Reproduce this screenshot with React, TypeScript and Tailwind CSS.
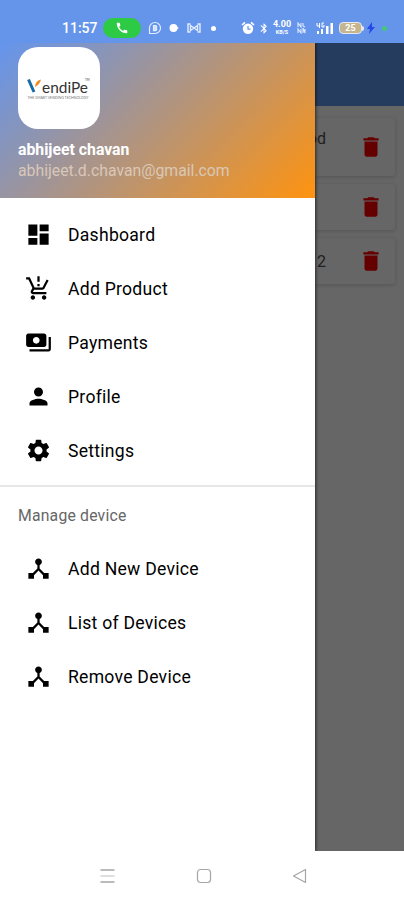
import type { IconType } from "react-icons";
import {
  MdBluetooth,
  MdCall,
  MdDashboard,
  MdDelete,
  MdDeviceHub,
  MdPayments,
  MdPerson,
  MdProductionQuantityLimits,
  MdSettings,
} from "react-icons/md";

interface MenuEntry {
  label: string;
  icon: IconType;
}

const MAIN_ITEMS: MenuEntry[] = [
  { label: "Dashboard", icon: MdDashboard },
  { label: "Add Product", icon: MdProductionQuantityLimits },
  { label: "Payments", icon: MdPayments },
  { label: "Profile", icon: MdPerson },
  { label: "Settings", icon: MdSettings },
];

const DEVICE_ITEMS: MenuEntry[] = [
  { label: "Add New Device", icon: MdDeviceHub },
  { label: "List of Devices", icon: MdDeviceHub },
  { label: "Remove Device", icon: MdDeviceHub },
];

function StatusBar() {
  return (
    <header className="flex h-[43px] shrink-0 items-center bg-[#6495ea] pt-[13px] text-white">
      <span className="ml-[62px] w-[36px] text-[14px] leading-none font-medium whitespace-nowrap">11:57</span>
      <span className="ml-[5px] flex h-[20px] w-[38px] items-center justify-center rounded-full bg-[#2dca45]">
        <MdCall className="h-[14px] w-[14px]" />
      </span>
      <svg className="ml-[7px] h-[14px] w-[14px]" viewBox="0 0 14 14" fill="none" stroke="#e4edff" strokeWidth="1.2">
        <path d="M1.5 12.5V7A5.5 5.5 0 1 1 7 12.5Z" />
        <path d="M5.5 4.5h2a1.2 1.2 0 0 1 0 2.5 1.2 1.2 0 0 1 0 2.6h-2Z" fill="#cfe0ff" />
      </svg>
      <svg className="ml-[7px] h-[10px] w-[11px]" viewBox="0 0 11 10" fill="#fff">
        <circle cx="4.5" cy="5" r="4" />
        <path d="M6 3l4 2-4 2Z" />
      </svg>
      <svg className="ml-[7px] h-[10px] w-[14px]" viewBox="0 0 14 10" fill="none" stroke="#e4edff" strokeWidth="1.4">
        <path d="M3.5 1H1v8h2.5M10.5 1H13v8h-2.5M3.5 2.5L7 5 3.5 7.5ZM10.5 2.5L7 5l3.5 2.5Z" />
      </svg>
      <span className="ml-[10px] h-[5px] w-[5px] rounded-full bg-white" />
      {/* Alarm clock, solid face */}
      <svg className="ml-[25px] h-[14px] w-[14px]" viewBox="0 0 14 14" fill="#fff">
        <circle cx="7" cy="7.8" r="5.2" />
        <path d="M1 4L4 1.3M13 4L10 1.3" stroke="#fff" strokeWidth="1.6" />
        <path d="M7 5v3.2h2.5" fill="none" stroke="#6495ea" strokeWidth="1.2" />
      </svg>
      <MdBluetooth className="ml-[3px] h-[13px] w-[12px]" />
      <span className="ml-[2px] flex w-[20px] flex-col items-center font-bold whitespace-nowrap">
        <span className="text-[9px] leading-[9px]">4.00</span>
        <span className="text-[5.5px] leading-[7px]">KB/S</span>
      </span>
      <svg className="ml-[5px] h-[12px] w-[9px]" viewBox="0 0 9 12" fill="none" stroke="#dce8ff" strokeWidth="1.1">
        <path d="M1 5V1l3 4V1M6 1v3l2 1M1 11V7l3 4V7M6 11V6l2 5V7" />
      </svg>
      <svg className="ml-[10px] h-[13px] w-[18px]" viewBox="0 0 18 13" fill="#fff">
        <path d="M1 9h2v3H1zM5 7h2v5H5zM10 4h2.5v8H10zM14.5 1H17v11h-2.5z" />
        <path d="M1 1v3h3M3.5 1v5M8 1H6v4h2V3" fill="none" stroke="#fff" strokeWidth="1" />
      </svg>
      <span className="ml-[5px] flex h-[12px] w-[23px] items-center justify-center rounded-[4px] border border-[#e5e8ef] bg-[#c5b58e] text-[9px] leading-none font-bold">
        25
      </span>
      <span className="h-[5px] w-[2px] rounded-r bg-[#e5e8ef]" />
      <svg className="ml-[3px] h-[12px] w-[8px]" viewBox="0 0 8 12" fill="#2548e8">
        <path d="M5 0L0 7h3l-1 5 6-7H5Z" />
      </svg>
      <span className="ml-[7px] h-[5px] w-[5px] rounded-full bg-[#43c878]" />
    </header>
  );
}

function Logo() {
  return (
    <div className="flex h-[82px] w-[82px] items-center justify-center rounded-[20px] bg-white">
      <svg className="h-[26px] w-[66px]" viewBox="0 0 66 26" fontFamily="Lato, sans-serif">
        <path d="M2.5 4.5L8 17" stroke="#176ba5" strokeWidth="3" fill="none" />
        <path d="M9 12Q9 6 15 4.5Q14 9 9 12Z" fill="#f18b1d" />
        <text x="16" y="18" fontSize="15" fill="#333" textLength="46" lengthAdjust="spacingAndGlyphs">
          endiPe
        </text>
        <text x="59" y="6" fontSize="3" fill="#333">TM</text>
        <text x="1.5" y="23.5" fontSize="2.8" fill="#777" textLength="61" lengthAdjust="spacingAndGlyphs">
          THE SMART VENDING TECHNOLOGY
        </text>
      </svg>
    </div>
  );
}

function MenuItem({ label, icon: Icon }: MenuEntry) {
  return (
    <li className="flex h-[54px] items-center pl-[25px]">
      <Icon className="h-[27px] w-[27px]" />
      <span className="ml-4 pt-[2px] text-[17.6px] leading-[20px] font-[450] tracking-[0.25px] whitespace-nowrap">
        {label}
      </span>
    </li>
  );
}

function Drawer() {
  return (
    <aside className="z-10 w-[315px] shrink-0 bg-white shadow-[1px_0_3px_rgba(0,0,0,0.6)]">
      <div className="h-[155px] bg-[linear-gradient(135deg,#6495ed,#ff930f)] pt-1 pl-[18px]">
        <Logo />
        <p className="mt-[11px] text-[15.8px] leading-[19px] font-bold text-white">abhijeet chavan</p>
        <p className="mt-[2px] text-[15.8px] leading-[19px] text-[#d9c8b8]">abhijeet.d.chavan@gmail.com</p>
      </div>
      <ul className="pt-[9px] pb-[8px]">
        {MAIN_ITEMS.map((item) => <MenuItem key={item.label} {...item} />)}
      </ul>
      <div className="flex h-[56px] items-center border-t-2 border-[#e6e6e6] pt-[3px] pl-[18px] text-[15.75px] tracking-[0.2px] text-[#666]">
        Manage device
      </div>
      <ul>
        {DEVICE_ITEMS.map((item) => <MenuItem key={item.label} {...item} />)}
      </ul>
    </aside>
  );
}

function DeviceCard({ name, className }: { name: string; className: string }) {
  return (
    <div className={`mr-[9px] flex items-center justify-between rounded-r-[3px] bg-[#666] pr-[11px] text-[#202020] shadow-[0_1px_4px_rgba(0,0,0,0.18)] ${className}`}>
      <span className="flex w-[11px] justify-end text-[16px] leading-[20px] whitespace-nowrap">{name}</span>
      <MdDelete className="h-[26px] w-[26px] shrink-0 text-[#650000]" />
    </div>
  );
}

export default function App() {
  return (
    <div className="flex h-[900px] w-[404px] flex-col overflow-hidden bg-white font-['Roboto',sans-serif] text-black">
      <StatusBar />
      <div className="flex h-[808px] overflow-hidden">
        <Drawer />
        {/* Dimmed device list behind the drawer */}
        <main className="min-w-0 flex-1 overflow-hidden bg-[#666]">
          <div className="h-[63px] bg-[#263c5f]" />
          <div className="flex flex-col gap-2 pt-3">
            <DeviceCard name="od" className="h-[58px] [&>span]:mb-[16px]" />
            <DeviceCard name="" className="h-[46px]" />
            <DeviceCard name="2" className="h-[46px] [&>span]:mt-[2px]" />
          </div>
        </main>
      </div>
      <nav className="flex flex-1 items-center pl-[100px]">
        <svg className="h-[16px] w-[15px]" viewBox="0 0 15 16" stroke="#a5a5a5" strokeWidth="1.3">
          <path d="M0.5 2h14M0.5 14h14" />
          <path d="M0.5 8h14" stroke="#ccc" />
        </svg>
        <svg className="ml-[81px] h-[16px] w-[16px]" viewBox="0 0 16 16" fill="none" stroke="#a5a5a5" strokeWidth="1.2">
          <rect x="1.5" y="1.5" width="13" height="13" rx="3" />
        </svg>
        <svg className="ml-[80px] h-[16px] w-[15px]" viewBox="0 0 15 16" fill="none" stroke="#a5a5a5" strokeWidth="1.2">
          <path d="M13.5 1.5v13L1.5 8Z" strokeLinejoin="round" />
        </svg>
      </nav>
    </div>
  );
}
